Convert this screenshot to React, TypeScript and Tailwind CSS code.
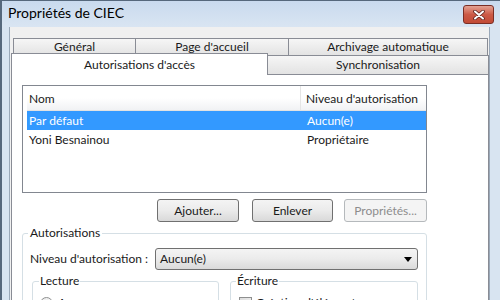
// Boîte de dialogue « Propriétés de CIEC » (style Windows 7)

const tabBack =
  'h-full flex items-center justify-center border-l border-t border-[#898c95] bg-gradient-to-b from-[#f6f6f6] to-[#e3e3e3]'

function Button({ label, w, disabled }: { label: string; w: string; disabled?: boolean }) {
  return (
    <div
      className={`${w} h-[23px] flex items-center justify-center rounded-[3px] border ${
        disabled
          ? 'border-[#b5b9bc] bg-[#f4f4f4] text-[#8d8d8d]'
          : 'border-[#707070] bg-gradient-to-b from-[#f4f4f4] via-[#ebebeb] to-[#d9d9d9] text-[#1a1a1a]'
      }`}
    >
      {label}
    </div>
  )
}

export default function App() {
  return (
    <div className="w-[500px] h-[300px] overflow-hidden flex flex-col bg-[#d8e4f1] border-l-2 border-t border-[#56687c] font-['Lato','Open_Sans',sans-serif] text-[12px] leading-[16px] text-[#1a1a1a]">
      {/* barre de titre */}
      <div className="h-[26px] shrink-0 flex items-start justify-between pl-[6px] pr-[6px] bg-gradient-to-b from-[#c9daee] to-[#d9e5f2]">
        <span className="mt-[3px] text-[14px] leading-[18px] text-black">Propriétés de CIEC</span>
        <div className="mt-[4px] w-[31px] h-[19px] flex items-center justify-center rounded-[3px] border border-[#7a2e25] bg-gradient-to-b from-[#e3a293] via-[#cc5a46] to-[#c24a35]">
          <svg width="12" height="10" viewBox="0 0 12 10">
            <path d="M2 1.5 L10 8.5 M10 1.5 L2 8.5" stroke="#5b231c" strokeWidth="3.6" strokeLinecap="round" />
            <path d="M2 1.5 L10 8.5 M10 1.5 L2 8.5" stroke="#ffffff" strokeWidth="2" strokeLinecap="round" />
          </svg>
        </div>
      </div>

      <div className="flex-1 flex pl-[7px] pr-[10px] min-h-0">
        <div className="flex-1 flex flex-col bg-[#f0f0f0] border-x border-[#9aa8b8] pt-[10px]">
          {/* onglets rangée arrière */}
          <div className="h-[18px] flex ml-[3px] pt-px">
            <div className={`${tabBack} w-[122px]`}>Général</div>
            <div className={`${tabBack} w-[153px]`}>Page d'accueil</div>
            <div className={`${tabBack} w-[200px] border-r`}>Archivage automatique</div>
          </div>
          {/* onglets rangée avant */}
          <div className="h-[19px] flex items-end ml-px">
            <div className="relative z-10 top-px w-[257px] h-[22px] flex items-center justify-center border-x border-t border-[#898c95] bg-white">
              Autorisations d'accès
            </div>
            <div className="w-[221px] h-[19px] flex items-center justify-center border-r border-t border-[#898c95] bg-gradient-to-b from-[#f6f6f6] to-[#e3e3e3]">
              Synchronisation
            </div>
          </div>

          {/* panneau */}
          <div className="flex-1 ml-px bg-white border border-[#898c95] pt-[10px] pl-[10px]">
            {/* liste */}
            <div className="w-[405px] h-[108px] border border-[#828790] pl-[4px]">
              <div className="h-[25px] flex border-b border-[#e2e2e2] bg-gradient-to-b from-white via-white to-[#f1f2f4]">
                <div className="w-[274px] border-r border-[#e5e5e5] pl-[2px] pt-[2px] flex items-center">Nom</div>
                <div className="pl-[5px] pt-[2px] flex items-center">Niveau d'autorisation</div>
              </div>
              <div className="h-[19px] flex bg-[#3399ff] text-white">
                <div className="w-[274px] pl-[2px] pt-px flex items-center">Par défaut</div>
                <div className="pl-[6px] pt-px flex items-center">Aucun(e)</div>
              </div>
              <div className="h-[19px] flex">
                <div className="w-[274px] pl-[2px] pt-px flex items-center">Yoni Besnainou</div>
                <div className="pl-[6px] pt-px flex items-center">Propriétaire</div>
              </div>
            </div>

            {/* boutons */}
            <div className="w-[405px] flex justify-end mt-[6px]">
              <Button label="Ajouter..." w="w-[82px]" />
              <div className="w-[13px]" />
              <Button label="Enlever" w="w-[81px]" />
              <div className="w-[11px]" />
              <Button label="Propriétés..." w="w-[83px]" disabled />
            </div>

            {/* groupe Autorisations */}
            <fieldset className="w-[405px] mt-[3px] border border-[#d5dfe5] rounded-[3px] pl-[7px] pb-[10px]">
              <legend className="ml-[-2px] px-[2px]">Autorisations</legend>
              <div className="flex items-center mt-[7px]">
                <span className="w-[125px]">Niveau d'autorisation :</span>
                <div className="w-[263px] h-[22px] flex items-center justify-between pl-[4px] pr-[5px] rounded-[3px] border border-[#707070] bg-gradient-to-b from-[#f4f4f4] via-[#ebebeb] to-[#dadada]">
                  <span>Aucun(e)</span>
                  <svg width="8" height="5" viewBox="0 0 8 5">
                    <path d="M0 0 H8 L4 5 Z" fill="#000" />
                  </svg>
                </div>
              </div>

              <div className="flex mt-[3px]">
                <fieldset className="ml-[2px] w-[187px] border border-[#d5dfe5] rounded-[3px] pl-[7px] pb-[8px]">
                  <legend className="ml-[-1px] px-px">Lecture</legend>
                  <div className="flex items-center mt-[6px] gap-[5px]">
                    <div className="w-[13px] h-[13px] rounded-full border border-[#8e8f8f] bg-gradient-to-br from-[#eaeaea] to-white flex items-center justify-center">
                      <div className="w-[7px] h-[7px] rounded-full bg-gradient-to-br from-[#8be070] to-[#2a8c2a]" />
                    </div>
                    <span>Aucun</span>
                  </div>
                </fieldset>
                <fieldset className="ml-[11px] w-[188px] border border-[#d5dfe5] rounded-[3px] pl-[6px] pb-[8px]">
                  <legend className="ml-[-1px] px-px">Écriture</legend>
                  <div className="flex items-center mt-[6px] ml-[2px] gap-[4px]">
                    <div className="w-[13px] h-[13px] border border-[#8e8f8f] bg-gradient-to-br from-[#dcdcdc] to-[#f7f7f7]" />
                    <span>Création d'éléments</span>
                  </div>
                </fieldset>
              </div>
            </fieldset>
          </div>
        </div>
      </div>
    </div>
  )
}
